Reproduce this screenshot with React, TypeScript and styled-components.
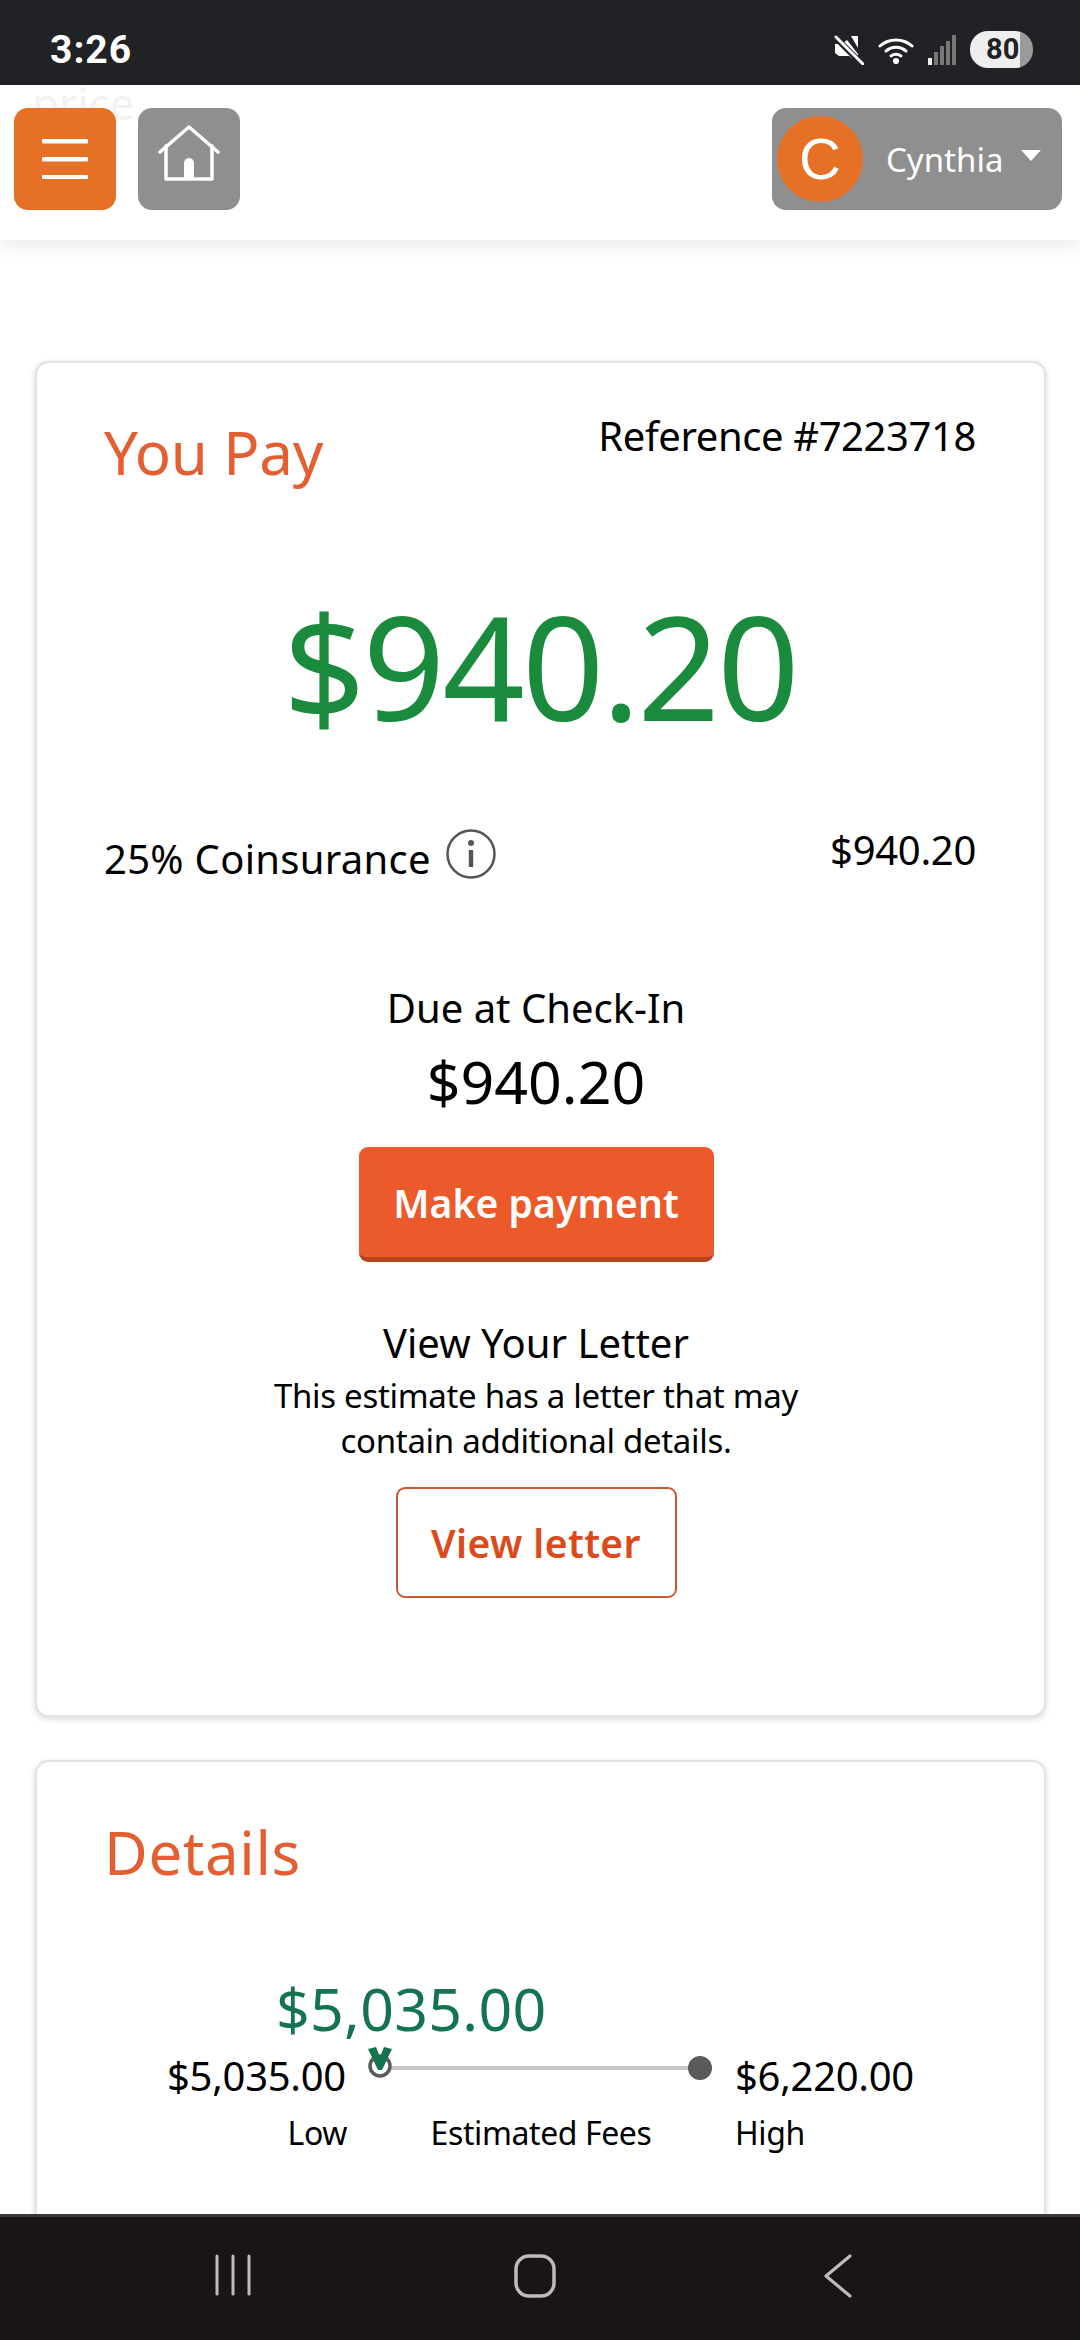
import React from "react";
import styled, { createGlobalStyle } from "styled-components";

const Global = createGlobalStyle`
  html, body { margin: 0; padding: 0; background: #fff; }
  * { box-sizing: border-box; }
  body { font-family: "Noto Sans", "Open Sans", sans-serif; color: #000; }
`;

const Page = styled.div`
  width: 1080px;
  height: 2340px;
  display: flex;
  flex-direction: column;
  overflow: hidden;
  background: #fff;
`;

const StatusBar = styled.div`
  height: 85px;
  flex: none;
  background: #212226;
  display: flex;
  align-items: flex-start;
  justify-content: space-between;
  padding: 28px 47px 0 50px;
  position: relative;
  z-index: 3;
`;

const Clock = styled.span`
  font-family: "Roboto", sans-serif;
  font-weight: 700;
  font-size: 39px;
  line-height: 44px;
  letter-spacing: 1px;
  color: #fff;
`;

const StatusIcons = styled.div`
  display: flex;
  align-items: center;
  margin-top: 3px;
  gap: 14px;
`;

const Battery = styled.div`
  width: 63px;
  height: 37px;
  border-radius: 18px;
  background: linear-gradient(90deg, #eeeeee 0 50px, #9a9a9a 50px);
  color: #212226;
  font-family: "Roboto", sans-serif;
  font-weight: 700;
  font-size: 29px;
  line-height: 37px;
  padding-left: 16px;
`;

const Header = styled.header`
  height: 155px;
  flex: none;
  background: #fff;
  display: flex;
  align-items: flex-start;
  padding: 23px 18px 0 14px;
  gap: 22px;
  position: relative;
  z-index: 2;
  box-shadow: 0 4px 18px rgba(0, 0, 0, 0.1);
`;

const GhostWord = styled.span`
  position: absolute;
  left: 32px;
  top: -7px;
  font-size: 44px;
  line-height: 50px;
  color: #f2f2f2;
`;

const IconButton = styled.button<{ $bg: string }>`
  width: 102px;
  height: 102px;
  border: 0;
  padding: 0;
  border-radius: 14px;
  background: ${(p) => p.$bg};
  display: flex;
  align-items: center;
  justify-content: center;
  position: relative;
`;

const HomeGlyph = styled.svg`
  margin-bottom: 12px;
`;

const UserButton = styled.button`
  margin-left: auto;
  width: 290px;
  height: 102px;
  border: 0;
  border-radius: 14px;
  background: #8f8f8f;
  display: flex;
  align-items: center;
  padding: 0 0 0 5px;
`;

const Avatar = styled.span`
  width: 86px;
  height: 86px;
  border-radius: 50%;
  background: #e67025;
  color: #fff;
  font-size: 58px;
  font-weight: 300;
  line-height: 86px;
  text-align: center;
  flex: none;
`;

const UserName = styled.span`
  margin-left: 23px;
  font-family: "Noto Sans", sans-serif;
  font-size: 33px;
  color: #fff;
`;

const Caret = styled.span`
  margin-left: 18px;
  margin-top: -8px;
  width: 0;
  height: 0;
  border-left: 10px solid transparent;
  border-right: 10px solid transparent;
  border-top: 11px solid #fff;
`;

const Main = styled.main`
  flex: 1;
  min-height: 0;
  overflow: hidden;
  padding: 121px 34px 0 35px;
`;

const Card = styled.section<{ $height?: number; $gap?: number }>`
  background: #fff;
  border: 2px solid #e3e3e3;
  border-radius: 14px;
  box-shadow: 0 2px 6px rgba(0, 0, 0, 0.16);
  padding: 0 68px 0 67px;
  height: ${(p) => (p.$height ? `${p.$height}px` : "auto")};
  margin-top: ${(p) => p.$gap ?? 0}px;
`;

const CardHead = styled.div`
  display: flex;
  justify-content: space-between;
  align-items: flex-start;
  padding-top: 49px;
`;

const CardTitle = styled.h2<{ $top?: number; $spacing: number }>`
  margin: ${(p) => p.$top ?? 0}px 0 0;
  font-weight: 400;
  font-size: 60px;
  line-height: 72px;
  letter-spacing: ${(p) => p.$spacing}px;
  color: #e35f32;
`;

const RefText = styled.span`
  font-size: 40px;
  line-height: 48px;
  letter-spacing: -0.4px;
`;

const BigAmount = styled.div`
  margin-top: 97px;
  text-align: center;
  font-size: 144px;
  line-height: 160px;
  letter-spacing: -2.7px;
  color: #1a8a3d;
`;

const LineItem = styled.div`
  margin-top: 81px;
  display: flex;
  justify-content: space-between;
  align-items: flex-start;
`;

const LineLabel = styled.div`
  display: flex;
  align-items: flex-start;
  gap: 15px;
`;

const LabelText = styled.span`
  margin-top: 9px;
  font-size: 40px;
  line-height: 48px;
  letter-spacing: 0.3px;
`;

const InfoIcon = styled.svg`
  margin-top: 3px;
  flex: none;
`;

const LineValue = styled.span`
  font-size: 40px;
  line-height: 48px;
  letter-spacing: -0.3px;
`;

const CenterBlock = styled.div`
  margin-top: 100px;
  padding-right: 8px;
  display: flex;
  flex-direction: column;
  align-items: center;
  text-align: center;
`;

const BlockHeading = styled.div<{ $top?: number }>`
  margin-top: ${(p) => p.$top ?? 0}px;
  font-size: 40px;
  line-height: 50px;
`;

const DueAmount = styled.div`
  margin-top: 13px;
  font-size: 59px;
  line-height: 70px;
`;

const PayButton = styled.button`
  margin-top: 31px;
  width: 355px;
  height: 115px;
  border: 0;
  border-bottom: 5px solid #b8431f;
  border-radius: 9px;
  background: #ec5a2b;
  color: #fff;
  font-family: inherit;
  font-weight: 600;
  font-size: 39px;
  letter-spacing: 0.1px;
`;

const LetterNote = styled.p`
  margin: 5px 0 0;
  font-size: 33px;
  line-height: 45px;
  letter-spacing: -0.3px;
`;

const LetterButton = styled.button`
  margin-top: 24px;
  width: 281px;
  height: 111px;
  background: #fff;
  border: 2px solid #c9592f;
  border-radius: 9px;
  color: #dc4a1c;
  font-family: inherit;
  font-weight: 600;
  font-size: 39px;
  letter-spacing: 0.4px;
`;

const CardTwoBody = styled.div`
  padding-top: 54px;
  height: 500px;
`;

const RangeAmount = styled.div`
  margin: 85px 0 0 172px;
  font-size: 59px;
  line-height: 70px;
  letter-spacing: 0.3px;
  color: #14744f;
`;

const RangeGrid = styled.div`
  margin: 9px 0 0 63px;
  display: grid;
  grid-template-columns: 180px 342px 178px;
  column-gap: 23px;
  row-gap: 11px;
`;

const RangeValue = styled.span`
  font-size: 40px;
  line-height: 48px;
  letter-spacing: -0.3px;
`;

const RangeLabel = styled.span<{ $align: string }>`
  font-size: 32px;
  line-height: 44px;
  letter-spacing: -0.4px;
  text-align: ${(p) => p.$align};
`;

const Track = styled.div`
  position: relative;
  height: 4px;
  margin-top: 14px;
  background: #c8c8c8;
`;

const StartHandle = styled.svg`
  position: absolute;
  left: -2px;
  top: -20px;
`;

const EndHandle = styled.span`
  position: absolute;
  right: 0;
  top: -10px;
  width: 24px;
  height: 24px;
  border-radius: 50%;
  background: #5a5a5a;
`;

const NavBar = styled.nav`
  height: 126px;
  flex: none;
  background: #1a1416;
  border-top: 3px solid #3a363a;
  display: grid;
  grid-template-columns: repeat(3, 1fr);
  position: relative;
  z-index: 3;
`;

const NavSlot = styled.div<{ $shift: number }>`
  display: flex;
  justify-content: center;
  padding-top: 37px;
  transform: translateX(${(p) => p.$shift}px);
`;

export default function App() {
  return (
    <Page>
      <Global />
      <StatusBar>
        <Clock>3:26</Clock>
        <StatusIcons>
          <svg width="30" height="30" viewBox="0 0 30 30">
            <path d="M1 10h7l5-4 11 14v8l-9-6H5l-4-3z" fill="#fff" transform="translate(0 -1)" />
            <path d="M17 1h7v12z" fill="#fff" />
            <path d="M1 2l27 27" stroke="#212226" strokeWidth="6" />
            <path d="M2 2l27 27" stroke="#fff" strokeWidth="3" strokeLinecap="round" />
          </svg>
          <svg width="36" height="28" viewBox="0 0 36 28" fill="none" stroke="#fff" strokeWidth="3" strokeLinecap="round">
            <path d="M2 10c9-8 23-8 32 0" />
            <path d="M8 15c6-5 14-5 20 0" />
            <path d="M13 20c3-2 7-2 10 0" />
            <circle cx="18" cy="25" r="1.6" fill="#fff" />
          </svg>
          <svg width="28" height="30" viewBox="0 0 28 30" fill="#777">
            <rect x="0" y="23" width="4" height="7" fill="#eee" />
            <rect x="6" y="17" width="4" height="13" />
            <rect x="12" y="11" width="4" height="19" />
            <rect x="18" y="6" width="4" height="24" />
            <rect x="24" y="0" width="4" height="30" />
          </svg>
          <Battery>80</Battery>
        </StatusIcons>
      </StatusBar>

      <Header>
        <GhostWord>price</GhostWord>
        <IconButton $bg="#e67025" aria-label="Menu">
          <svg width="46" height="40" viewBox="0 0 46 40" fill="#fff">
            <rect y="0" width="46" height="4.5" rx="1" />
            <rect y="18" width="46" height="4.5" rx="1" />
            <rect y="36" width="46" height="4.5" rx="1" />
          </svg>
        </IconButton>
        <IconButton $bg="#8f8f8f" aria-label="Home">
          <HomeGlyph width="62" height="56" viewBox="0 0 62 56" fill="none" stroke="#fff" strokeWidth="3.5" strokeLinecap="round" strokeLinejoin="round">
            <path d="M2 27 31 2l29 25" />
            <path d="M8 21v33h46V21" />
            <path d="M26 54V38a5 5 0 0 1 10 0v16z" fill="#fff" strokeWidth="0" />
          </HomeGlyph>
        </IconButton>
        <UserButton>
          <Avatar>C</Avatar>
          <UserName>Cynthia</UserName>
          <Caret />
        </UserButton>
      </Header>

      <Main>
        <Card $height={1356}>
          <CardHead>
            <CardTitle $top={4} $spacing={-0.2}>You Pay</CardTitle>
            <RefText>Reference #7223718</RefText>
          </CardHead>
          <BigAmount>$940.20</BigAmount>
          <LineItem>
            <LineLabel>
              <LabelText>25% Coinsurance</LabelText>
              <InfoIcon width="50" height="50" viewBox="0 0 50 50" fill="none">
                <circle cx="25" cy="25" r="23.5" stroke="#555" strokeWidth="2.5" />
                <circle cx="25" cy="14" r="3" fill="#555" />
                <rect x="22.8" y="21" width="4.4" height="17" fill="#555" />
              </InfoIcon>
            </LineLabel>
            <LineValue>$940.20</LineValue>
          </LineItem>
          <CenterBlock>
            <BlockHeading>Due at Check-In</BlockHeading>
            <DueAmount>$940.20</DueAmount>
            <PayButton>Make payment</PayButton>
            <BlockHeading $top={56}>View Your Letter</BlockHeading>
            <LetterNote>
              This estimate has a letter that may
              <br />
              contain additional details.
            </LetterNote>
            <LetterButton>View letter</LetterButton>
          </CenterBlock>
        </Card>

        <Card $gap={43}>
          <CardTwoBody>
            <CardTitle $spacing={0.6}>Details</CardTitle>
            <RangeAmount>$5,035.00</RangeAmount>
            <RangeGrid>
              <RangeValue>$5,035.00</RangeValue>
              <Track>
                <StartHandle width="26" height="34" viewBox="0 0 26 34" fill="none">
                  <circle cx="12" cy="20" r="10" fill="#fff" stroke="#5a5a5a" strokeWidth="3.5" />
                  <path d="M0 3l8-2 4 10 4-10 8 2-10 21h-4z" fill="#14744f" />
                </StartHandle>
                <EndHandle />
              </Track>
              <RangeValue>$6,220.00</RangeValue>
              <RangeLabel $align="right">Low</RangeLabel>
              <RangeLabel $align="center">Estimated Fees</RangeLabel>
              <RangeLabel $align="left">High</RangeLabel>
            </RangeGrid>
          </CardTwoBody>
        </Card>
      </Main>

      <NavBar>
        <NavSlot $shift={53}>
          <svg width="36" height="42" viewBox="0 0 36 42" stroke="#bdbbbc" strokeWidth="3" strokeLinecap="round">
            <path d="M2 2v38M18 2v38M34 2v38" />
          </svg>
        </NavSlot>
        <NavSlot $shift={-5}>
          <svg width="42" height="44" viewBox="0 0 42 44" fill="none" stroke="#bdbbbc" strokeWidth="3.5">
            <rect x="2" y="2" width="38" height="40" rx="13" />
          </svg>
        </NavSlot>
        <NavSlot $shift={-62}>
          <svg width="28" height="44" viewBox="0 0 28 44" fill="none" stroke="#bdbbbc" strokeWidth="3.2" strokeLinecap="round" strokeLinejoin="round">
            <path d="M26 2 2 22l24 20" />
          </svg>
        </NavSlot>
      </NavBar>
    </Page>
  );
}
